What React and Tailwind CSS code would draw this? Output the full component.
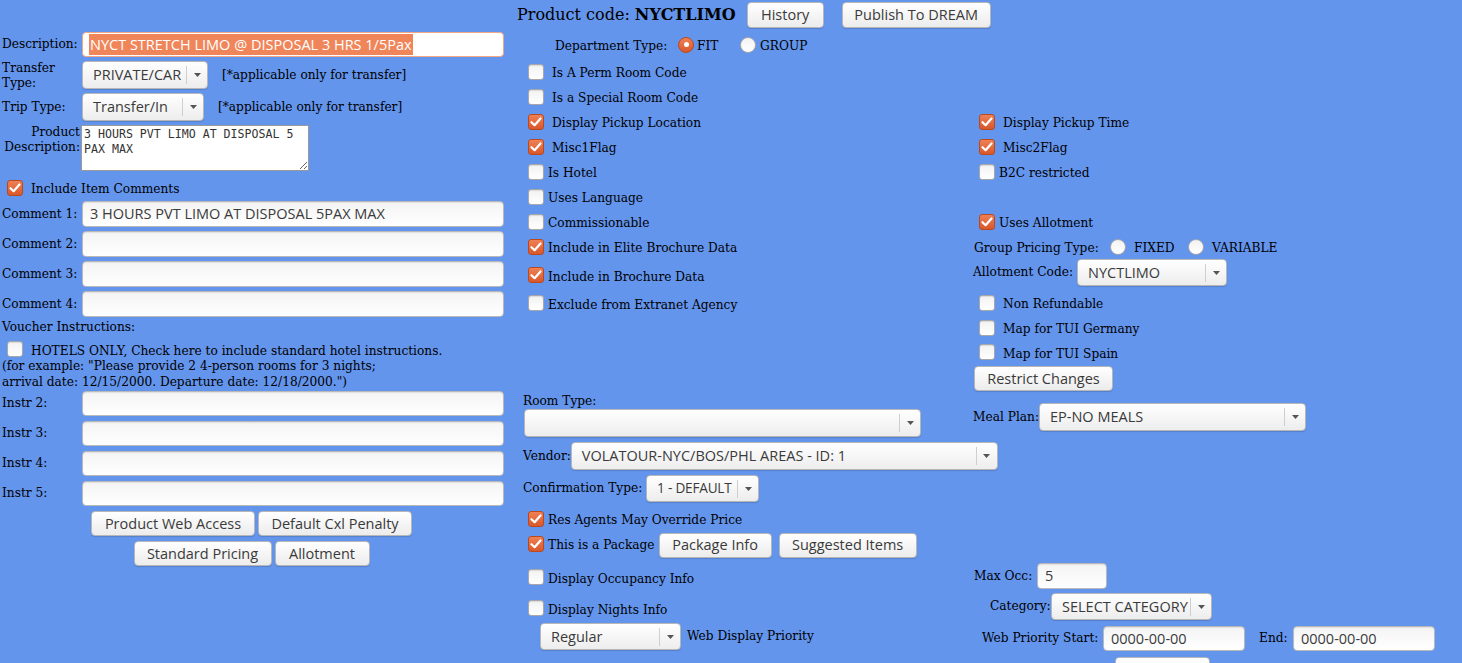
import React from "react";

const widget = "font-['Open_Sans','DejaVu_Sans',sans-serif] text-[14.5px] text-[#3a3a3a]";

const Btn = ({ children, className = "" }) => (
    <div className={`flex items-center justify-center h-[25px] rounded-[4px] border border-[#b7b7b7] bg-gradient-to-b from-white to-[#ececec] shadow-[0_1px_1px_rgba(0,0,0,0.15)] px-[10px] whitespace-nowrap ${widget} ${className}`}>
        {children}
    </div>
);

const Select = ({ value, className = "", h = "h-[28px]", textClass = "" }) => (
    <div className={`flex items-center shrink-0 ${h} rounded-[4px] border border-[#b7b7b7] bg-gradient-to-b from-white to-[#ededed] shadow-[0_1px_1px_rgba(0,0,0,0.15)] ${widget} ${className}`}>
        <span className={`flex-1 pl-[10px] whitespace-nowrap overflow-hidden ${textClass}`}>{value}</span>
        <span className="w-[21px] h-[18px] border-l border-[#cfcfcf] flex items-center justify-center">
            <svg width="7" height="4" viewBox="0 0 7 4"><path d="M0 0H7L3.5 4Z" fill="#555" /></svg>
        </span>
    </div>
);

const TextInput = ({ value, className = "", h = "h-[25px]" }) => (
    <div className={`flex items-center shrink-0 ${h} rounded-[4px] border border-[#b9b9b9] bg-gradient-to-b from-[#f4f4f4] to-white shadow-[inset_0_1px_1px_rgba(0,0,0,0.08)] pl-[7px] whitespace-nowrap ${widget} ${className}`}>
        {value}
    </div>
);

const Check = ({ checked }) => (
    checked ? (
        <span className="w-[16px] h-[16px] shrink-0 rounded-[3px] border border-[#b84a1f] bg-gradient-to-b from-[#f08055] to-[#d9572b] flex items-center justify-center mb-[4px]">
            <svg width="12" height="10" viewBox="0 0 12 10"><path d="M1.5 5.2L4.6 8.2L10.5 1.5" stroke="white" strokeWidth="2.2" fill="none" strokeLinecap="round" strokeLinejoin="round" /></svg>
        </span>
    ) : (
        <span className="w-[16px] h-[16px] shrink-0 rounded-[3px] border border-[#a8a8a8] bg-gradient-to-b from-[#f2f2f2] to-white shadow-[inset_0_1px_1px_rgba(0,0,0,0.1)] mb-[4px]" />
    )
);

const Radio = ({ checked }) => (
    checked ? (
        <span className="w-[16px] h-[16px] shrink-0 rounded-full border border-[#b84a1f] bg-gradient-to-b from-[#f08055] to-[#d9572b] flex items-center justify-center mb-[4px]">
            <span className="w-[5px] h-[5px] rounded-full bg-white" />
        </span>
    ) : (
        <span className="w-[16px] h-[16px] shrink-0 rounded-full border border-[#a8a8a8] bg-gradient-to-b from-[#f2f2f2] to-white mb-[4px]" />
    )
);

const CheckRow = ({ checked, label, gap = "gap-[8px]", h = "h-[25px]", pl = "pl-[5px]", children }) => (
    <div className={`flex items-center ${h} ${pl} ${gap} whitespace-nowrap`}>
        <Check checked={checked} />
        <span>{label}</span>
        {children}
    </div>
);

const FieldRow = ({ label, children, className = "" }) => (
    <div className={`flex items-center ${className}`}>
        <span className="w-[82px] shrink-0 pl-[2px] whitespace-nowrap">{label}</span>
        {children}
    </div>
);

export default function App() {
    return (
        <div className="w-[1462px] h-[663px] overflow-hidden bg-[#6495ed] font-['DejaVu_Serif',serif] text-[12.2px] text-black">
            <div className="flex items-center h-[32px] pl-[517px] pb-[3px]">
                <span className="text-[16px] whitespace-nowrap">Product code: <b>NYCTLIMO</b></span>
                <Btn className="ml-[11px] w-[77px] h-[26px]">History</Btn>
                <Btn className="ml-[18px] w-[149px] h-[26px]">Publish To DREAM</Btn>
            </div>

            <div className="flex">
                {/* left column */}
                <div className="w-[505px] shrink-0 flex flex-col">
                    <FieldRow label="Description:" className="h-[25px]">
                        <div className={`flex items-center w-[422px] h-[25px] rounded-[4px] border border-[#f3a683] bg-white pl-[6px] ${widget}`}>
                            <span className="bg-[#f0855a] text-white px-[1px]">NYCT STRETCH LIMO @ DISPOSAL 3 HRS 1/5Pax</span>
                        </div>
                    </FieldRow>
                    <FieldRow label={<span className="block leading-[15px] pt-[1px]">Transfer<br />Type:</span>} className="h-[28px] mt-[4px]">
                        <Select value="PRIVATE/CAR" className="w-[126px]" />
                        <span className="ml-[14px] whitespace-nowrap">[*applicable only for transfer]</span>
                    </FieldRow>
                    <FieldRow label="Trip Type:" className="h-[28px] mt-[4px]">
                        <Select value="Transfer/In" className="w-[122px]" />
                        <span className="ml-[14px] whitespace-nowrap">[*applicable only for transfer]</span>
                    </FieldRow>
                    <div className="flex mt-[4px] h-[45px]">
                        <span className="w-[81px] shrink-0 text-right leading-[15px] pr-[1px]">Product<br />Description:</span>
                        <textarea
                            readOnly
                            defaultValue="3 HOURS PVT LIMO AT DISPOSAL 5 PAX MAX"
                            className="w-[228px] h-[46px] bg-white border border-[#9a9a9a] px-[2px] py-[1px] font-['DejaVu_Sans_Mono',monospace] text-[11.6px] leading-[15px] text-[#333] outline-none"
                        />
                    </div>
                    <CheckRow checked label="Include Item Comments" h="h-[25px]" pl="pl-[7px] mt-[7px]" />
                    <FieldRow label="Comment 1:" className="h-[26px] -mt-[1px]">
                        <TextInput value="3 HOURS PVT LIMO AT DISPOSAL 5PAX MAX" h="h-[26px]" className="w-[422px]" />
                    </FieldRow>
                    <FieldRow label="Comment 2:" className="h-[26px] mt-[4px]">
                        <TextInput h="h-[26px]" className="w-[422px]" />
                    </FieldRow>
                    <FieldRow label="Comment 3:" className="h-[26px] mt-[4px]">
                        <TextInput h="h-[26px]" className="w-[422px]" />
                    </FieldRow>
                    <FieldRow label="Comment 4:" className="h-[26px] mt-[4px]">
                        <TextInput h="h-[26px]" className="w-[422px]" />
                    </FieldRow>
                    <div className="h-[16px] mt-[2px] pl-[2px] leading-[16px]">Voucher Instructions:</div>
                    <CheckRow label="HOTELS ONLY, Check here to include standard hotel instructions." h="h-[26px]" pl="pl-[7px] mt-[3px]" />
                    <div className="pl-[2px] leading-[16px] -mt-[6px]">
                        (for example: "Please provide 2 4-person rooms for 3 nights;<br />
                        arrival date: 12/15/2000. Departure date: 12/18/2000.")
                    </div>
                    {["Instr 2:", "Instr 3:", "Instr 4:", "Instr 5:"].map((l, i) => (
                        <FieldRow key={l} label={l} className={`h-[25px] ${i === 0 ? "mt-[1px]" : "mt-[5px]"}`}>
                            <TextInput className="w-[422px]" />
                        </FieldRow>
                    ))}
                    <div className="flex justify-center gap-[3px] mt-[5px] pr-[2px]">
                        <Btn className="w-[164px]">Product Web Access</Btn>
                        <Btn className="w-[154px]">Default Cxl Penalty</Btn>
                    </div>
                    <div className="flex justify-center gap-[3px] mt-[5px] pr-[2px]">
                        <Btn className="w-[138px]">Standard Pricing</Btn>
                        <Btn className="w-[95px]">Allotment</Btn>
                    </div>
                </div>

                {/* right region */}
                <div className="ml-[18px] flex-1 flex flex-col">
                    <div className="flex">
                        {/* middle upper */}
                        <div className="w-[447px] shrink-0 flex flex-col">
                            <div className="flex items-center h-[29px] pl-[32px] whitespace-nowrap">
                                <span className="w-[123px]">Department Type:</span>
                                <Radio checked />
                                <span className="ml-[3px] w-[43px]">FIT</span>
                                <Radio />
                                <span className="ml-[4px]">GROUP</span>
                            </div>
                            <CheckRow label="Is A Perm Room Code" />
                            <CheckRow label="Is a Special Room Code" />
                            <CheckRow checked label="Display Pickup Location" />
                            <CheckRow checked label="Misc1Flag" />
                            <CheckRow label="Is Hotel" gap="gap-[4px]" />
                            <CheckRow label="Uses Language" gap="gap-[4px]" />
                            <CheckRow label="Commissionable" gap="gap-[4px]" />
                            <CheckRow checked label="Include in Elite Brochure Data" gap="gap-[4px]" />
                            <CheckRow checked label="Include in Brochure Data" gap="gap-[4px]" h="h-[26px]" pl="pl-[5px] mt-[3px]" />
                            <CheckRow label="Exclude from Extranet Agency" gap="gap-[4px]" h="h-[26px]" pl="pl-[5px] mt-[2px]" />
                        </div>
                        {/* right upper */}
                        <div className="flex-1 flex flex-col pt-[79px]">
                            <CheckRow checked label="Display Pickup Time" pl="pl-[9px]" />
                            <CheckRow checked label="Misc2Flag" pl="pl-[9px]" />
                            <CheckRow label="B2C restricted" pl="pl-[9px]" gap="gap-[4px]" />
                            <div className="h-[25px]" />
                            <CheckRow checked label="Uses Allotment" pl="pl-[9px]" gap="gap-[4px]" />
                            <div className="flex items-center h-[25px] pl-[4px] whitespace-nowrap">
                                <span className="w-[136px]">Group Pricing Type:</span>
                                <Radio />
                                <span className="ml-[8px] w-[54px]">FIXED</span>
                                <Radio />
                                <span className="ml-[8px]">VARIABLE</span>
                            </div>
                            <div className="flex items-center h-[27px] mt-[-2px] pl-[3px] whitespace-nowrap">
                                <span className="w-[104px]">Allotment Code:</span>
                                <Select value="NYCTLIMO" h="h-[27px]" className="w-[150px]" />
                            </div>
                            <CheckRow label="Non Refundable" pl="pl-[9px] mt-[6px]" />
                            <CheckRow label="Map for TUI Germany" pl="pl-[9px]" />
                            <CheckRow label="Map for TUI Spain" pl="pl-[9px]" h="h-[24px]" />
                            <div className="flex pl-[4px]">
                                <Btn className="w-[139px]">Restrict Changes</Btn>
                            </div>
                        </div>
                    </div>

                    <div className="flex mt-[1px]">
                        {/* middle lower */}
                        <div className="w-[447px] shrink-0 flex flex-col">
                            <div className="h-[17px] leading-[17px] pt-[1px]">Room Type:</div>
                            <Select value="" className="w-[397px] ml-[1px]" />
                            <div className="flex items-center h-[28px] mt-[5px] whitespace-nowrap">
                                <span className="w-[49px]">Vendor:</span>
                                <Select value="VOLATOUR-NYC/BOS/PHL AREAS - ID: 1" className="w-[427px]" />
                            </div>
                            <div className="flex items-center h-[27px] mt-[5px] whitespace-nowrap">
                                <span className="w-[123px]">Confirmation Type:</span>
                                <Select value="1 - DEFAULT" h="h-[27px]" className="w-[113px]" textClass="pl-[9px] text-[13.6px] tracking-[-0.2px]" />
                            </div>
                            <CheckRow checked label="Res Agents May Override Price" gap="gap-[4px]" pl="pl-[5px] mt-[6px]" />
                            <CheckRow checked label="This is a Package" gap="gap-[4px]">
                                <Btn className="w-[113px] mb-[1px]">Package Info</Btn>
                                <Btn className="w-[138px] ml-[3px] mb-[1px]">Suggested Items</Btn>
                            </CheckRow>
                            <CheckRow label="Display Occupancy Info" gap="gap-[4px]" h="h-[26px]" pl="pl-[5px] mt-[8px]" />
                            <CheckRow label="Display Nights Info" gap="gap-[4px]" h="h-[26px]" pl="pl-[5px] mt-[5px]" />
                            <div className="flex items-center h-[27px] pl-[17px] whitespace-nowrap">
                                <Select value="Regular" h="h-[27px]" className="w-[141px]" />
                                <span className="ml-[6px]">Web Display Priority</span>
                            </div>
                        </div>
                        {/* right lower */}
                        <div className="flex-1 flex flex-col">
                            <div className="flex items-center h-[28px] mt-[11px] pl-[3px] whitespace-nowrap">
                                <span className="w-[66px]">Meal Plan:</span>
                                <Select value="EP-NO MEALS" className="w-[267px]" />
                            </div>
                            <div className="flex items-center h-[26px] mt-[132px] pl-[4px] whitespace-nowrap">
                                <span className="w-[63px]">Max Occ:</span>
                                <TextInput value="5" h="h-[26px]" className="w-[70px]" />
                            </div>
                            <div className="flex items-center h-[27px] mt-[4px] pl-[20px] whitespace-nowrap">
                                <span className="w-[61px]">Category:</span>
                                <Select value="SELECT CATEGORY" h="h-[27px]" className="w-[161px]" />
                            </div>
                            <div className="flex items-center h-[25px] mt-[6px] pl-[12px] whitespace-nowrap">
                                <span className="w-[121px]">Web Priority Start:</span>
                                <TextInput value="0000-00-00" className="w-[142px]" />
                                <span className="ml-[14px] w-[34px]">End:</span>
                                <TextInput value="0000-00-00" className="w-[142px]" />
                            </div>
                            <div className="flex pl-[145px] mt-[6px]">
                                <Btn className="w-[95px]">&nbsp;</Btn>
                            </div>
                        </div>
                    </div>
                </div>
            </div>
        </div>
    );
}
